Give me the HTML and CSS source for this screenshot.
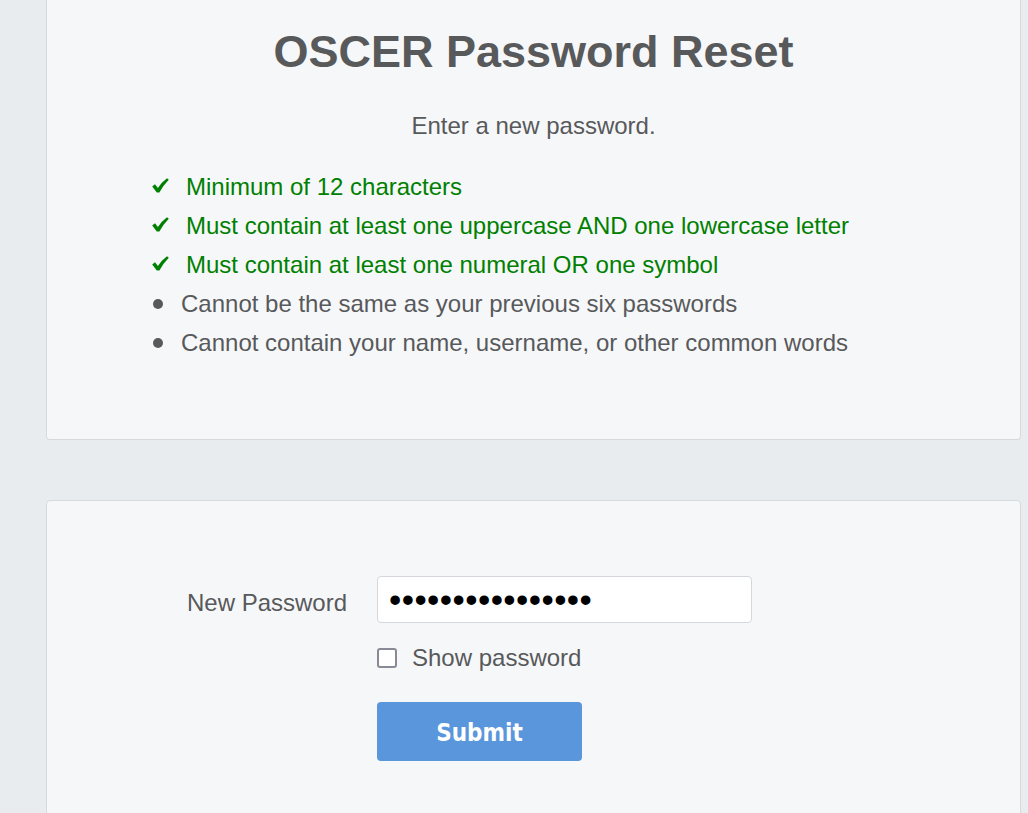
FILE: index.html
```html
<!DOCTYPE html>
<html lang="en">
<head>
<meta charset="utf-8">
<title>OSCER Password Reset</title>
<link rel="stylesheet" href="styles.css">
</head>
<body>
<main class="page">
  <section class="card card-top">
    <h1 class="title">OSCER Password Reset</h1>
    <p class="intro">Enter a new password.</p>
    <ul class="rules">
      <li class="rule rule-ok"><span class="mark mark-check"><svg width="17" height="15" viewBox="0 0 17 15"><path d="M0.2 8.4 L3.0 6.3 L5.9 9.9 Q9.8 4.0 15.0 0.2 L16.8 1.7 Q11.4 7.0 7.4 14.6 L4.8 14.6 Z" fill="#008000"/></svg></span>Minimum of 12 characters</li>
      <li class="rule rule-ok"><span class="mark mark-check"><svg width="17" height="15" viewBox="0 0 17 15"><path d="M0.2 8.4 L3.0 6.3 L5.9 9.9 Q9.8 4.0 15.0 0.2 L16.8 1.7 Q11.4 7.0 7.4 14.6 L4.8 14.6 Z" fill="#008000"/></svg></span>Must contain at least one uppercase AND one lowercase letter</li>
      <li class="rule rule-ok"><span class="mark mark-check"><svg width="17" height="15" viewBox="0 0 17 15"><path d="M0.2 8.4 L3.0 6.3 L5.9 9.9 Q9.8 4.0 15.0 0.2 L16.8 1.7 Q11.4 7.0 7.4 14.6 L4.8 14.6 Z" fill="#008000"/></svg></span>Must contain at least one numeral OR one symbol</li>
      <li class="rule"><span class="mark mark-dot"><span class="dot"></span></span>Cannot be the same as your previous six passwords</li>
      <li class="rule"><span class="mark mark-dot"><span class="dot"></span></span>Cannot contain your name, username, or other common words</li>
    </ul>
  </section>

  <section class="card card-form">
    <form class="form" onsubmit="return false;">
      <div class="row">
        <label class="label" for="pw">New Password</label>
        <input class="input" id="pw" type="password" value="abcdefghijklmnop">
      </div>
      <div class="row-indent show-row">
        <span class="checkbox"></span>
        <span class="show-text">Show password</span>
      </div>
      <div class="row-indent">
        <button class="submit" type="submit">Submit</button>
      </div>
    </form>
  </section>
</main>
</body>
</html>
```

FILE: styles.css
```css
html, body {
  margin: 0;
  padding: 0;
  background: #e9ecef;
}
body {
  font-family: "Liberation Sans", Arial, sans-serif;
  color: #58595b;
  height: 813px;
  overflow: hidden;
}
.page {
  padding: 0 7px 0 46px;
}
.card {
  background: #f6f7f9;
  border: 1px solid #d7dadd;
  border-radius: 4px;
}
.card-top {
  border-top: none;
  border-top-left-radius: 0;
  border-top-right-radius: 0;
  padding: 26px 0 77px 0;
}
.title {
  margin: 0;
  font-size: 45px;
  line-height: 52px;
  font-weight: bold;
  text-align: center;
  color: #58595b;
}
.intro {
  margin: 28px 0 0 0;
  font-size: 24px;
  line-height: 39px;
  text-align: center;
}
.rules {
  list-style: none;
  margin: 22px 0 0 105px;
  padding: 0;
}
.rule {
  display: flex;
  align-items: center;
  font-size: 24px;
  line-height: 39px;
  color: #58595b;
}
.rule-ok {
  color: #008000;
}
.mark {
  display: flex;
  align-items: center;
  flex: none;
}
.mark-check {
  width: 34px;
  padding-bottom: 3px;
}
.mark-check svg {
  display: block;
}
.mark-dot {
  width: 29px;
  padding-left: 1px;
  box-sizing: border-box;
}
.dot {
  display: block;
  width: 10px;
  height: 10px;
  border-radius: 50%;
  background: #58595b;
}
.card-form {
  margin-top: 60px;
  padding: 75px 0 200px 140px;
}
.form {
  margin: 0;
}
.row {
  display: flex;
  align-items: flex-start;
}
.label {
  width: 190px;
  flex: none;
  font-size: 24px;
  line-height: 39px;
  margin-top: 7px;
  color: #58595b;
}
.input {
  box-sizing: border-box;
  width: 375px;
  height: 47px;
  margin: 0;
  padding: 0 10px 0 11px;
  border: 1px solid #d4d7db;
  border-radius: 4px;
  background: #fff;
  font-family: "Liberation Sans", Arial, sans-serif;
  font-size: 35px;
  letter-spacing: 0.45px;
  color: #000;
  outline: none;
}
.row-indent {
  margin-left: 190px;
}
.show-row {
  display: flex;
  align-items: center;
  height: 39px;
  margin-top: 15px;
}
.checkbox {
  box-sizing: border-box;
  width: 20px;
  height: 20px;
  border: 2px solid #8a8a96;
  border-radius: 3px;
  background: #fff;
  margin-right: 15px;
  flex: none;
}
.show-text {
  font-size: 24px;
  line-height: 39px;
}
.submit {
  display: block;
  margin-top: 25px;
  width: 205px;
  height: 59px;
  border: none;
  border-radius: 4px;
  background: #5a96db;
  color: #fff;
  font-family: "DejaVu Sans Condensed", "DejaVu Sans", sans-serif;
  font-stretch: condensed;
  font-weight: bold;
  font-size: 24px;
  padding: 2px 0 0 0;
  cursor: pointer;
}
```
